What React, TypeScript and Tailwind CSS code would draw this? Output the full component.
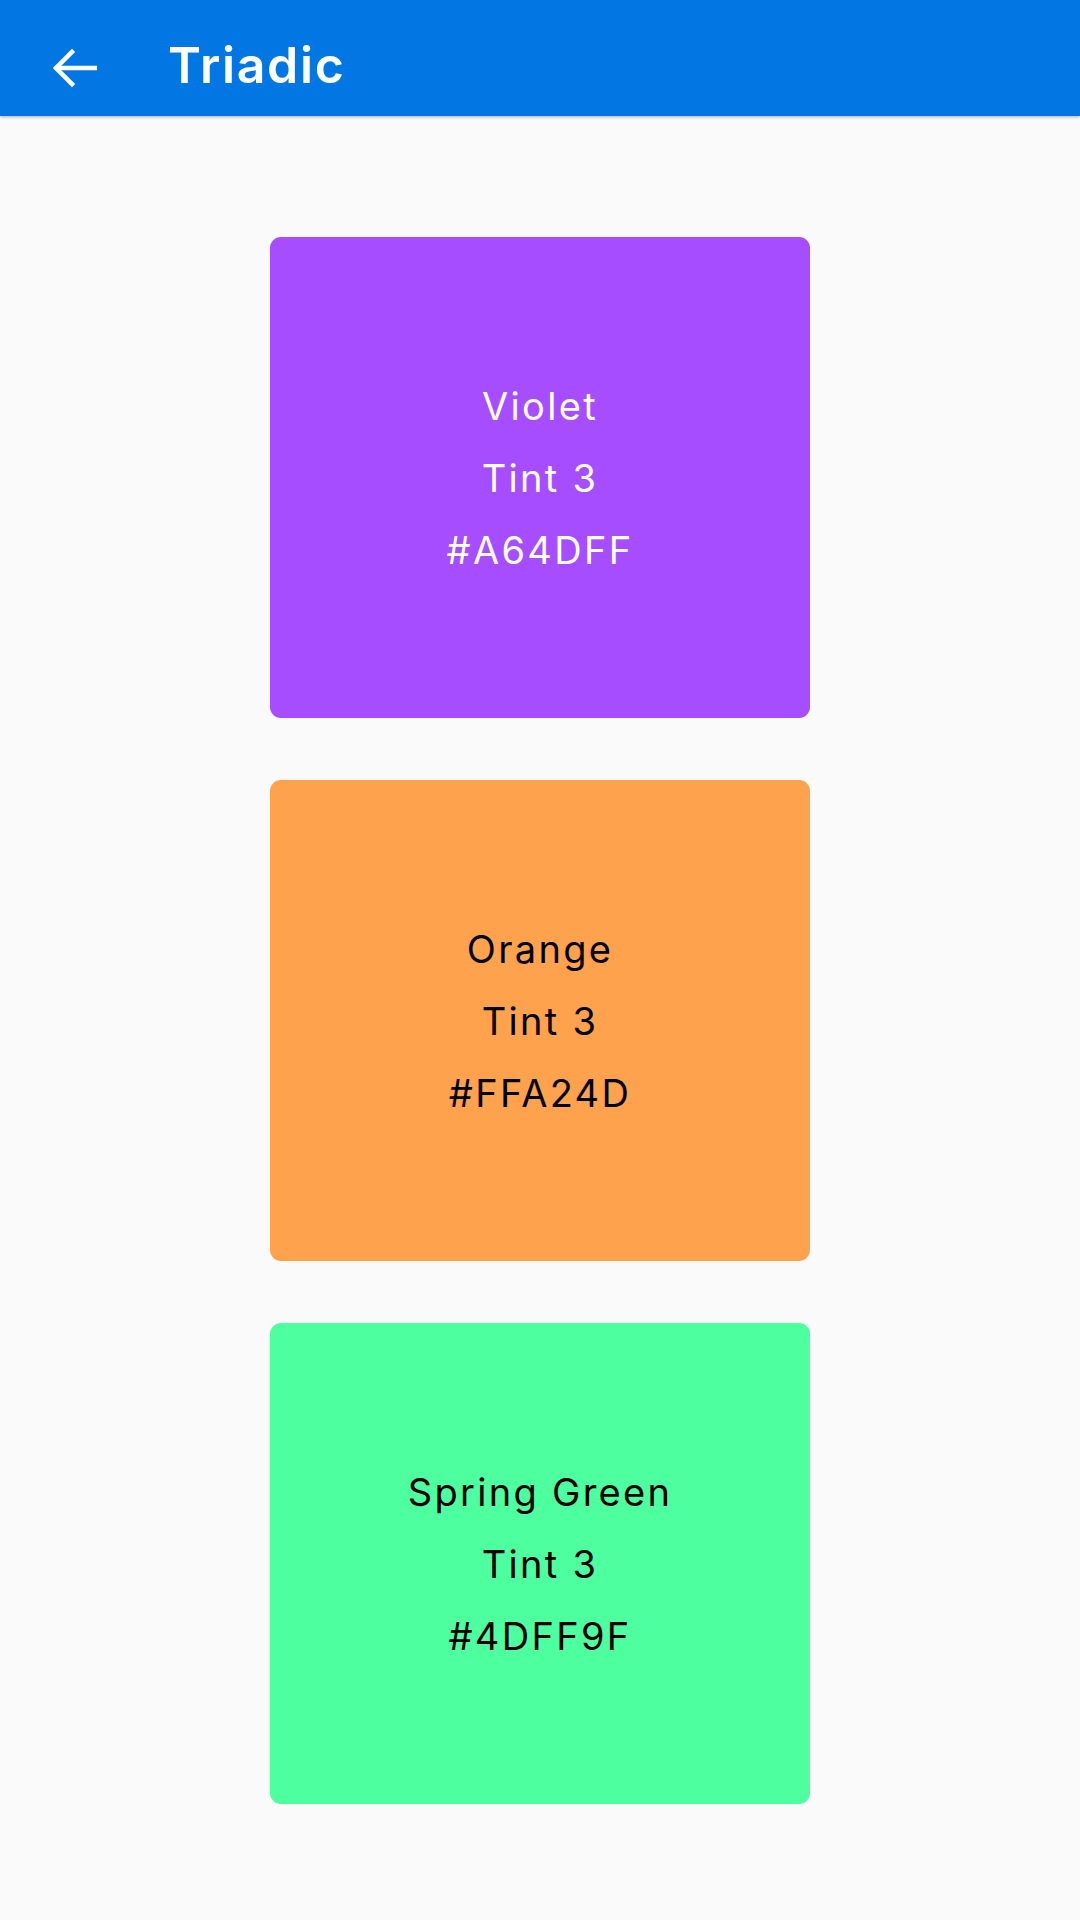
import React from "react";

type Swatch = {
  name: string;
  hex: string;
  dark: boolean;
};

const swatches: Swatch[] = [
  { name: "Violet", hex: "#A64DFF", dark: false },
  { name: "Orange", hex: "#FFA24D", dark: true },
  { name: "Spring Green", hex: "#4DFF9F", dark: true },
];

function BackArrow() {
  return (
    <svg width="46" height="40" viewBox="0 0 46 40" fill="none" stroke="white" strokeWidth="4.5" strokeLinecap="square">
      <path d="M44 20H6" />
      <path d="M21 4L5 20l16 16" />
    </svg>
  );
}

export default function App() {
  return (
    <div className="min-h-[1920px] w-[1080px] bg-[#fafafa]" style={{ fontFamily: "Inter, Roboto, sans-serif" }}>
      {/* App bar */}
      <header className="h-[116px] bg-[#0277e4] flex items-center shadow-[0_1px_3px_rgba(0,0,0,0.3)]">
        <div className="w-[168px] flex items-center pl-[51px] pt-[20px]">
          <BackArrow />
        </div>
        <h1 className="text-white text-[50px] font-semibold tracking-[1.7px] pt-[14px]">Triadic</h1>
      </header>

      {/* Color cards */}
      <main className="flex flex-col items-center gap-[62px] pt-[121px]">
        {swatches.map((s) => (
          <div
            key={s.hex}
            className={`w-[540px] h-[481px] rounded-[11px] flex flex-col items-center justify-center text-[38px] leading-[72px] tracking-[2.3px] ${
              s.dark ? "text-black" : "text-white"
            }`}
            style={{ backgroundColor: s.hex }}
          >
            <span>{s.name}</span>
            <span>Tint 3</span>
            <span>{s.hex}</span>
          </div>
        ))}
      </main>
    </div>
  );
}
